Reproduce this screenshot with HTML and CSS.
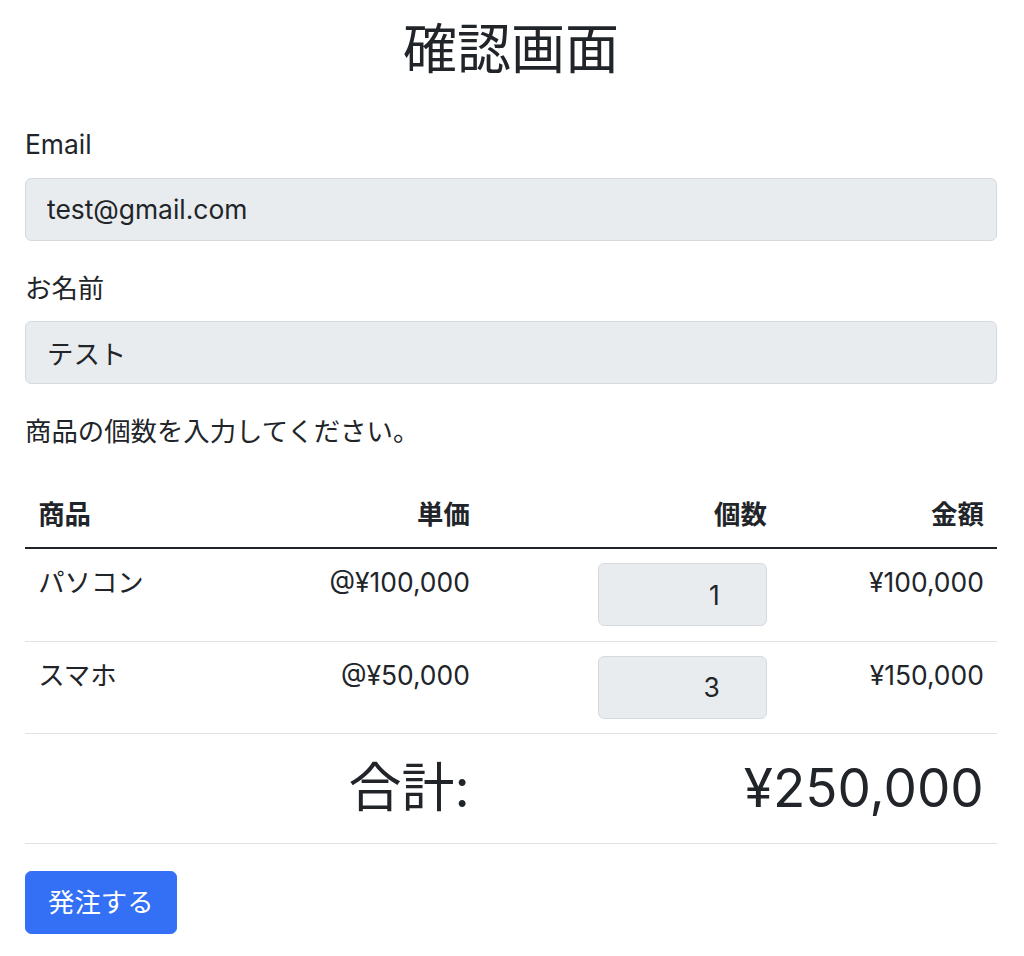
FILE: index.html
```html
<!DOCTYPE html>
<html lang="ja">
<head>
<meta charset="utf-8">
<title>確認画面</title>
<link rel="stylesheet" href="styles.css">
</head>
<body>
<div class="container">
  <h1 class="title">確認画面</h1>
  <div class="field">
    <label class="label" for="email">Email</label>
    <input class="control" id="email" type="text" value="test@gmail.com" readonly>
  </div>
  <div class="field">
    <label class="label" for="name">お名前</label>
    <input class="control" id="name" type="text" value="テスト" readonly>
  </div>
  <p class="note">商品の個数を入力してください。</p>
  <table class="items">
    <colgroup>
      <col class="c1"><col class="c2"><col class="c3"><col class="c4">
    </colgroup>
    <thead>
      <tr>
        <th>商品</th>
        <th class="end">単価</th>
        <th class="end">個数</th>
        <th class="end">金額</th>
      </tr>
    </thead>
    <tbody>
      <tr>
        <td>パソコン</td>
        <td class="end">@¥100,000</td>
        <td class="end"><input class="qty" type="text" value="1" readonly></td>
        <td class="end">¥100,000</td>
      </tr>
      <tr>
        <td>スマホ</td>
        <td class="end">@¥50,000</td>
        <td class="end"><input class="qty" type="text" value="3" readonly></td>
        <td class="end">¥150,000</td>
      </tr>
      <tr class="total">
        <td colspan="2" class="end">合計:</td>
        <td colspan="2" class="end">¥250,000</td>
      </tr>
    </tbody>
  </table>
  <button class="btn" type="button">発注する</button>
</div>
</body>
</html>
```
FILE: styles.css
```css
html, body {
  margin: 0;
  padding: 0;
  background: #fff;
}
body {
  font-family: "Inter", "Noto Sans CJK JP", sans-serif;
  font-size: 26.4px;
  line-height: 39.6px;
  color: #212529;
}
.container {
  width: 972px;
  margin: 0 0 0 25px;
  padding: 0 0 20px;
}
.title {
  margin: 18px 0 42px;
  font-size: 54px;
  line-height: 64.8px;
  font-weight: 400;
  text-align: center;
}
.field {
  margin-bottom: 28px;
}
.label {
  display: block;
  margin-bottom: 13.2px;
}
.control {
  display: block;
  box-sizing: border-box;
  width: 100%;
  height: 63px;
  margin: 0;
  padding: 0 21px;
  font: inherit;
  color: #212529;
  background: #e9ecef;
  border: 1px solid #d5d9de;
  border-radius: 6.2px;
  outline: none;
}
.note {
  margin: 0 0 29.5px;
}
.items {
  width: 972px;
  border-collapse: collapse;
  table-layout: fixed;
  margin-bottom: 27px;
  vertical-align: top;
}
.c1 { width: 215px; }
.c2 { width: 243px; }
.c3 { width: 297px; }
.c4 { width: 217px; }
.items th,
.items td {
  padding: 13.2px;
  text-align: left;
  vertical-align: top;
}
.items tbody td {
  padding-top: 14px;
  padding-bottom: 14.5px;
}
.items th {
  font-weight: 700;
}
.items thead tr {
  border-bottom: 2px solid #212529;
}
.items tbody tr {
  border-bottom: 1px solid #dee2e6;
}
.items .end {
  text-align: right;
}
.qty {
  box-sizing: border-box;
  width: 169px;
  height: 63px;
  margin: 0;
  padding: 0 46px 0 12px;
  font: inherit;
  color: #212529;
  text-align: right;
  background: #e9ecef;
  border: 1px solid #d5d9de;
  border-radius: 6.2px;
  outline: none;
  vertical-align: top;
}
.items .total td {
  font-size: 53px;
  line-height: 80px;
}
.btn {
  display: block;
  box-sizing: border-box;
  height: 63px;
  margin: 0;
  padding: 0 22px;
  font: inherit;
  color: #fff;
  background: #3370f6;
  border: 1px solid #3370f6;
  border-radius: 6.2px;
}
```
